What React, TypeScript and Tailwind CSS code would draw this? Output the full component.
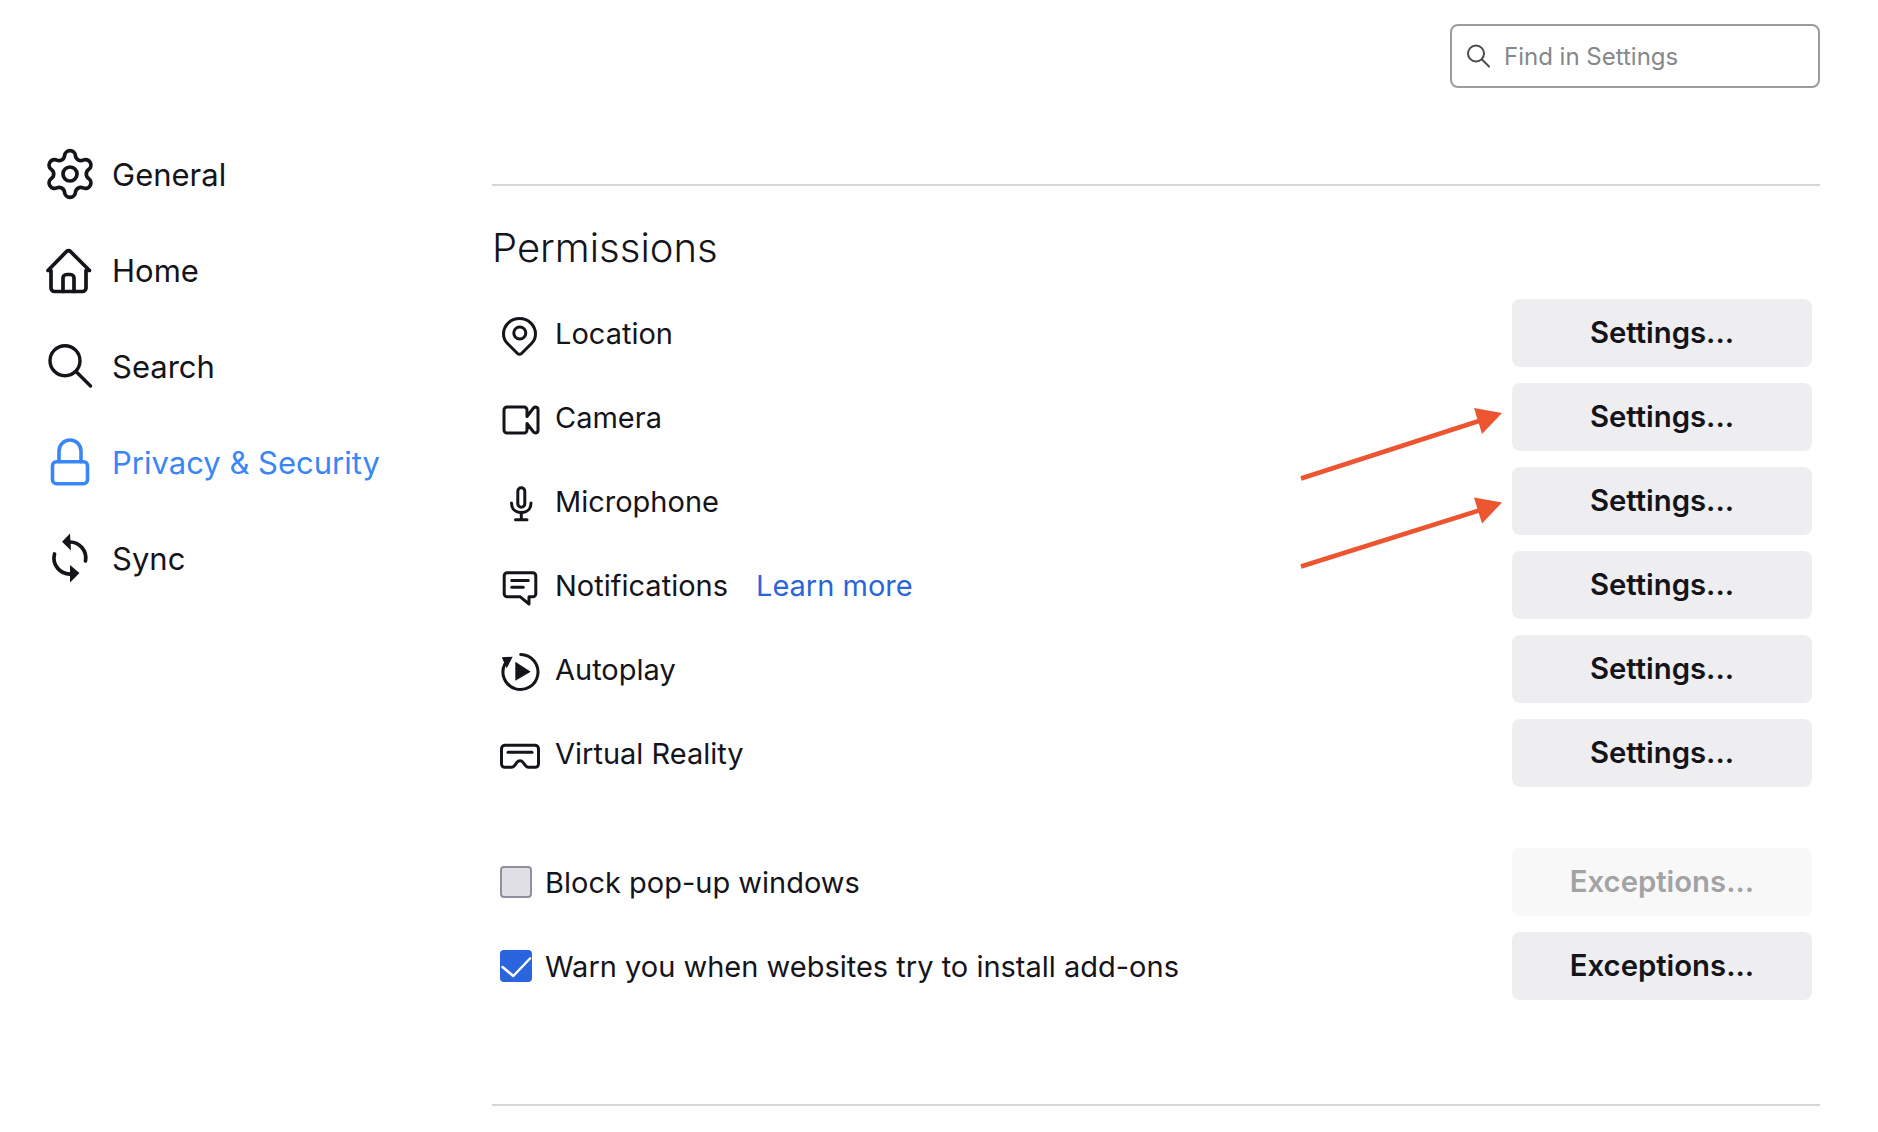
import { Settings } from "lucide-react";
import type { ReactNode } from "react";

const stroke = {
  fill: "none",
  stroke: "currentColor",
  strokeLinecap: "round" as const,
  strokeLinejoin: "round" as const,
};

function NavIcon({ children }: { children: ReactNode }) {
  return (
    <svg width="56" height="56" viewBox="0 0 56 56" className="shrink-0">
      {children}
    </svg>
  );
}

function RowIcon({ children }: { children: ReactNode }) {
  return (
    <svg width="40" height="40" viewBox="0 0 40 40" strokeWidth="3" className="mt-[6px] shrink-0" {...stroke}>
      {children}
    </svg>
  );
}

const navItems: { label: string; active?: boolean; icon: ReactNode }[] = [
  {
    label: "General",
    icon: <Settings size={56} strokeWidth={1.6} className="shrink-0" />,
  },
  {
    label: "Home",
    icon: (
      <NavIcon>
        <g {...stroke} strokeWidth="3.7">
          <path d="M6 28.5H9V46a3.5 3.5 0 0 0 3.5 3.5H40.5A3.5 3.5 0 0 0 44 46V28.5H47.5L28.5 9.5a3 3 0 0 0-4 0Z" />
          <path d="M21 49.5V36a3.5 3.5 0 0 1 3.5-3.5h4A3.5 3.5 0 0 1 32 36V49.5" />
        </g>
      </NavIcon>
    ),
  },
  {
    label: "Search",
    icon: (
      <NavIcon>
        <g {...stroke} strokeWidth="3.4">
          <circle cx="23" cy="22.7" r="15" />
          <path d="M34 33.5L48.5 48" />
        </g>
      </NavIcon>
    ),
  },
  {
    label: "Privacy & Security",
    active: true,
    icon: (
      <NavIcon>
        <g {...stroke} strokeWidth="3.6">
          <rect x="10.5" y="27.7" width="35" height="22" rx="4" />
          <path d="M17 27.7V17a11 11 0 0 1 22 0V27.7" />
        </g>
      </NavIcon>
    ),
  },
  {
    label: "Sync",
    icon: (
      <NavIcon>
        <g {...stroke} strokeWidth="3.7">
          <path d="M27 12A16 16 0 0 1 43.5 31" />
          <path d="M29 44A16 16 0 0 1 12.5 24" />
        </g>
        <path d="M28 3.5L20 11.7L29 20.5Z" fill="currentColor" />
        <path d="M28 35L37.5 43L28 52.5Z" fill="currentColor" />
      </NavIcon>
    ),
  },
];

const permissions: { label: string; link?: string; icon: ReactNode }[] = [
  {
    label: "Location",
    icon: (
      <RowIcon>
        <path d="M19.5 2.5C28.5 2.5 35.5 9.5 35.5 18C35.5 22 34 25 31.5 27.5L21.5 37.5A2.8 2.8 0 0 1 17.5 37.5L7.5 27.5C5 25 3.5 22 3.5 18C3.5 9.5 10.5 2.5 19.5 2.5Z" />
        <circle cx="19.8" cy="17" r="6" />
      </RowIcon>
    ),
  },
  {
    label: "Camera",
    icon: (
      <RowIcon>
        <path d="M7 7H24a3 3 0 0 1 3 3v6.5l6.5-8.5c1.5-1.5 4.5-1 4.5 1.5V30.5c0 2.5-3 3-4.5 1.5L27 23.5V30a3 3 0 0 1-3 3H7a3 3 0 0 1-3-3V10a3 3 0 0 1 3-3Z" />
      </RowIcon>
    ),
  },
  {
    label: "Microphone",
    icon: (
      <RowIcon>
        <rect x="17.8" y="3.7" width="7" height="19.5" rx="3.5" />
        <path d="M11.5 19C11.5 25 15.5 28.5 21.3 28.5C27 28.5 31 25 31 19" />
        <path d="M21.3 28.5V35.5M15.5 35.7H27" />
      </RowIcon>
    ),
  },
  {
    label: "Notifications",
    link: "Learn more",
    icon: (
      <RowIcon>
        <path d="M7.2 4.7H32.8a3 3 0 0 1 3 3V25.7a3 3 0 0 1-3 3H29V36L20 28.7H7.2a3 3 0 0 1-3-3V7.7a3 3 0 0 1 3-3Z" />
        <path d="M11.7 12.5H28.3M11.7 19.2H23.3" />
      </RowIcon>
    ),
  },
  {
    label: "Autoplay",
    icon: (
      <RowIcon>
        <path d="M20.7 2.5A17.5 17.5 0 1 1 4.9 12" />
        <path d="M1.7 5.3L12.7 4.7L6.7 16.3Z" fill="currentColor" strokeWidth="0" />
        <path d="M15.3 9.7L30.7 19.7L15.3 28.7Z" fill="currentColor" strokeWidth="0" />
      </RowIcon>
    ),
  },
  {
    label: "Virtual Reality",
    icon: (
      <RowIcon>
        <path d="M5 9.3H35a3.5 3.5 0 0 1 3.5 3.5V28a3.3 3.3 0 0 1-3.3 3.3H28.5c-1.5 0-2.3-.8-3.2-2l-2.3-3c-1.6-2-4.4-2-6 0l-2.3 3c-.9 1.2-1.7 2-3.2 2H4.8A3.3 3.3 0 0 1 1.5 28V12.8A3.5 3.5 0 0 1 5 9.3Z" />
        <path d="M8 16.2H32" />
      </RowIcon>
    ),
  },
];

function ActionButton({ label, disabled }: { label: string; disabled?: boolean }) {
  return (
    <button
      disabled={disabled}
      className={
        disabled
          ? "h-[68px] w-[300px] shrink-0 rounded-lg bg-[#f8f8f9] text-[29.3px] font-semibold text-[#a3a3a6]"
          : "h-[68px] w-[300px] shrink-0 rounded-lg bg-[#eeeef0] text-[29.3px] font-semibold text-[#15141a]"
      }
    >
      {label}
    </button>
  );
}

export default function App() {
  return (
    <div className="relative flex h-[1132px] w-full overflow-hidden bg-white font-['Inter',sans-serif] text-[#15141a]">
      <aside className="w-[492px] shrink-0 pl-[42px] pt-[126px]">
        <nav className="flex flex-col">
          {navItems.map((item) => (
            <div
              key={item.label}
              className={
                item.active
                  ? "flex h-[96px] items-center gap-[14px] text-[31px] text-[#3b86f6]"
                  : "flex h-[96px] items-center gap-[14px] text-[31px]"
              }
            >
              {item.icon}
              <span className="pt-[2px]">{item.label}</span>
            </div>
          ))}
        </nav>
      </aside>

      <main className="min-w-0 flex-1 pr-[58px]">
        <div className="flex justify-end pt-[24px]">
          <div className="flex h-[64px] w-[370px] items-center gap-[14px] rounded-lg border-2 border-[#9c9c9e] pl-[14px]">
            <svg width="24" height="24" viewBox="0 0 24 24" className="shrink-0 text-[#4a4a4f]" strokeWidth="2" {...stroke}>
              <circle cx="10" cy="9.5" r="8" />
              <path d="M16 15.5L23 22.5" />
            </svg>
            <span className="pt-[2px] text-[24px] text-[#87878a]">Find in Settings</span>
          </div>
        </div>

        <div className="mt-[96px] h-[2px] bg-[#d7d7db]" />

        <section className="px-[8px]">
          <h2 className="-ml-[8px] mt-[37px] h-[50px] text-[40px] font-light leading-[50px]">Permissions</h2>

          <div className="mt-[26px] flex flex-col gap-[16px]">
            {permissions.map((row) => (
              <div key={row.label} className="flex items-center justify-between">
                <div className="flex items-center gap-[15px] text-[29px]">
                  {row.icon}
                  <span className="pt-[2px]">{row.label}</span>
                  {row.link && <a className="ml-[13px] pt-[2px] text-[#2a66d9]">{row.link}</a>}
                </div>
                <ActionButton label="Settings..." />
              </div>
            ))}
          </div>

          <div className="mt-[61px] flex flex-col gap-[16px]">
            <div className="flex items-center justify-between">
              <div className="flex items-center gap-[13px] text-[29px]">
                <span className="h-[32px] w-[32px] shrink-0 rounded border-2 border-[#8f8f9d] bg-[#e0e0e6]" />
                <span className="pt-[2px]">Block pop-up windows</span>
              </div>
              <ActionButton label="Exceptions..." disabled />
            </div>
            <div className="flex items-center justify-between">
              <div className="flex items-center gap-[13px] text-[29px]">
                <span className="flex h-[32px] w-[32px] shrink-0 items-center justify-center rounded bg-[#2b65dd]">
                  <svg width="32" height="32" viewBox="0 0 32 32" className="text-white" strokeWidth="2.5" {...stroke}>
                    <path d="M2.5 17L13.3 26L30 8.5" />
                  </svg>
                </span>
                <span className="pt-[2px]">Warn you when websites try to install add-ons</span>
              </div>
              <ActionButton label="Exceptions..." />
            </div>
          </div>
        </section>

        <div className="mt-[104px] h-[2px] bg-[#d7d7db]" />
      </main>

      <svg width="206" height="170" viewBox="0 0 206 170" className="absolute left-[1298px] top-[405px]">
        <g fill="#ec5530" stroke="#ec5530">
          <path d="M3 73.5L184 15" strokeWidth="4.5" />
          <path d="M204 8L176 3L184 29Z" strokeWidth="0" />
          <path d="M3 161.5L184 104.5" strokeWidth="4.5" />
          <path d="M204 97.5L176 92.5L184 118.5Z" strokeWidth="0" />
        </g>
      </svg>
    </div>
  );
}
